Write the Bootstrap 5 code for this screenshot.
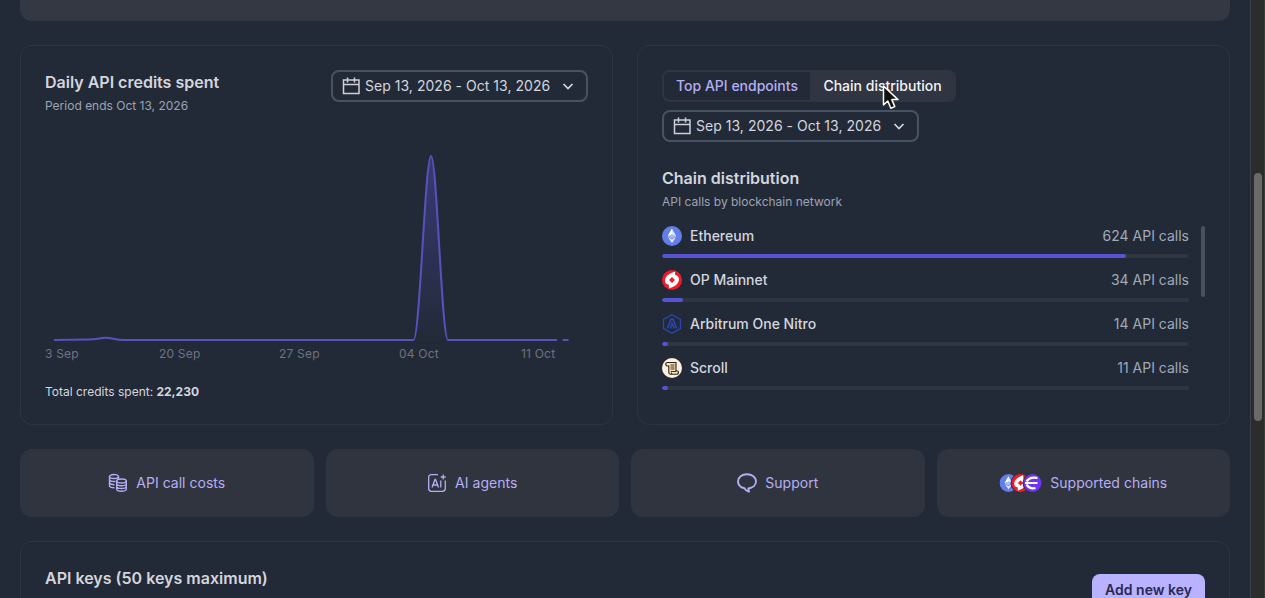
<!DOCTYPE html>
<html lang="en">
<head>
  <meta charset="UTF-8" />
  <meta name="viewport" content="width=device-width, initial-scale=1.0" />
  <title>API dashboard</title>
  <link href="https://cdn.jsdelivr.net/npm/bootstrap@5.3.0/dist/css/bootstrap.min.css" rel="stylesheet">
  <style>
    body {
      background: #232a37;
      color: #d3d6df;
      font-family: Inter, "Liberation Sans", sans-serif;
      font-size: 14px;
      line-height: 20px;
      height: 598px;
      overflow: hidden;
    }

    .page-main {
      width: 1250px;
      height: 598px;
      padding: 0 20px;
      overflow: hidden;
    }

    .top-banner {
      height: 21px;
      margin-bottom: 24px;
      background: #343843;
      border-radius: 0 0 12px 12px;
    }

    .panel {
      background: #232a37;
      border: 1px solid #2e3541;
      border-radius: 12px;
      padding: 24px;
    }

    .stat-panel {
      flex: 1 1 0;
      height: 380px;
    }

    .panel-title {
      font-size: 16px;
      font-weight: 600;
      line-height: 24px;
      margin: 0;
      color: #d3d5de;
    }

    .panel-sub {
      font-size: 12px;
      line-height: 20px;
      margin: 2px 0 0;
      color: #9ca3b4;
    }

    .date-btn {
      width: 257px;
      height: 32px;
      padding: 0 12px 0 9px;
      border: 2px solid #465363;
      border-radius: 8px;
      background: none;
      color: #d3d6df;
      font-size: 14px;
      line-height: 20px;
      letter-spacing: .03px;
    }

    .date-btn .cal { margin-right: 5px; }

    .tab-group {
      width: 294px;
      height: 32px;
      border: 2px solid #303541;
      border-radius: 8px;
      overflow: hidden;
      font-weight: 500;
    }

    .tab-link {
      color: #b5aef5;
      width: 146px;
      text-align: center;
    }

    .tab-link.is-on {
      color: #f3f4f8;
      background: #313541;
      flex: 1;
      padding-left: 1px;
    }

    .chart text {
      font-size: 12px;
      fill: #6d7380;
      letter-spacing: .2px;
    }

    .chain-wrap { margin-top: 14px; }
    .chain-list { width: 527px; }
    .chain-row { margin-bottom: 12px; }
    .chain-row svg { margin-right: 8px; }
    .chain-name { font-weight: 500; }
    .chain-calls { color: #9fa9ba; }

    .chain-bar {
      height: 4px;
      margin-top: 8px;
      background: #303541;
      border-radius: 2px;
    }

    .chain-bar .progress-bar {
      background: #5753d3;
      border-radius: 2px;
    }

    .list-thumb {
      width: 4px;
      height: 71px;
      margin-left: 12px;
      background: #4b505d;
      border-radius: 2px;
    }

    .tile {
      flex: 1 1 0;
      height: 68px;
      background: #30343f;
      border-radius: 12px;
      color: #b5aef5;
      letter-spacing: .03px;
    }

    .key-btn {
      width: 113px;
      height: 32px;
      padding: 0;
      border: 0;
      border-radius: 8px;
      background: #b9b3ff;
      color: #2a2850;
      font-size: 14px;
      font-weight: 600;
    }

    .page-scroll {
      width: 15px;
      height: 598px;
      padding: 173px 0 0 3px;
      background: #2b2c2c;
      border-left: 1px solid #3b3f45;
      border-right: 1px solid #3b3d3d;
    }

    .page-thumb {
      width: 8px;
      height: 248px;
      background: #6a6a68;
      border-radius: 4px;
    }

    .pointer {
      position: absolute;
      left: 881px;
      top: 84px;
    }
  </style>
</head>
<body>
  <!-- Shared icons -->
  <svg width="0" height="0" class="position-absolute">
    <defs>
      <symbol id="cal" viewBox="0 0 18 18">
        <path d="M1.500 3h15.500v13.500H1.500zM1.500 7.500h15.500M5.500 .5v5M12.500 .5v5" fill="none" stroke="#cdd0d9" stroke-width="1.500" />
      </symbol>
      <symbol id="chev" viewBox="0 0 12 12">
        <path d="M1.500 4 6 8.500 10.500 4" fill="none" stroke="#d3d6df" stroke-width="1.700" />
      </symbol>
      <symbol id="eth" viewBox="0 0 20 20">
        <circle cx="10" cy="10" r="10" fill="#627eea" />
        <path d="M10 2.500 5.800 10 10 12.400 14.200 10z" fill="#dfe5fd" />
        <path d="M10 2.500 5.800 10 10 8.200z" fill="#fff" />
        <path d="M10 8.200 5.800 10 10 12.400 14.200 10z" fill="#a9b8f5" />
        <path d="M5.800 11 10 17 14.200 11 10 13.500z" fill="#e6eafd" />
      </symbol>
      <symbol id="op" viewBox="0 0 20 20">
        <circle cx="10" cy="10" r="10" fill="#f01a2b" />
        <path d="M13 1.500C8 3 3.200 6 3 10.500c-.1 2.700 1.400 4 3.800 4.200L7 18.500C12 17 16.800 14 17 9.500c.1-2.700-1.400-4-3.800-4.200z" fill="#fff" />
        <path d="M10 7 11.500 8.500 13 10 11.500 11.500 10 13 8.500 11.500 7 10 8.500 8.500z" fill="#f01a2b" />
      </symbol>
    </defs>
  </svg>

  <div class="d-flex">
    <main class="page-main">
      <div class="top-banner"></div>

      <div class="d-flex gap-4">
        <!-- Daily credits -->
        <section class="panel stat-panel">
          <div class="d-flex justify-content-between align-items-start">
            <div>
              <h2 class="panel-title">Daily API credits spent</h2>
              <p class="panel-sub">Period ends Oct 13, 2026</p>
            </div>
            <button class="date-btn d-flex align-items-center">
              <svg class="cal" width="18" height="18"><use href="#cal" /></svg>
              <span>Sep 13, 2026 - Oct 13, 2026</span>
              <svg class="ms-auto" width="12" height="12"><use href="#chev" /></svg>
            </button>
          </div>
          <svg class="chart d-block" width="543" height="266" viewBox="45 116 543 266">
            <defs>
              <linearGradient id="fade" x1="0" y1="0" x2="0" y2="1">
                <stop offset="0" stop-color="#5753d3" stop-opacity=".4" />
                <stop offset="1" stop-color="#5753d3" stop-opacity="0" />
              </linearGradient>
            </defs>
            <path d="M414 340C420 336 425 156 431 156S442 336 448 340z" fill="url(#fade)" />
            <path d="M54 340L88 339.500C98 339.500 100 337.700 106 337.700S115 340 124 340H413.500C420 340 425 156 431 156S441.500 340 448 340H557" fill="none" stroke="#5753bd" stroke-width="2" />
            <path d="M562.500 340H568.500" stroke="#5753bd" stroke-width="2" />
            <text x="45" y="358">3 Sep</text>
            <text x="159" y="358">20 Sep</text>
            <text x="279" y="358">27 Sep</text>
            <text x="399" y="358">04 Oct</text>
            <text x="521" y="358">11 Oct</text>
          </svg>
          <div class="panel-sub m-0 text-reset">Total credits spent: <b>22,230</b></div>
        </section>

        <!-- Chain distribution -->
        <section class="panel stat-panel">
          <div class="tab-group d-flex align-items-stretch">
            <span class="tab-link d-flex align-items-center justify-content-center">Top API endpoints</span>
            <span class="tab-link is-on d-flex align-items-center justify-content-center">Chain distribution</span>
          </div>
          <button class="date-btn d-flex align-items-center mt-2 mb-4">
            <svg class="cal" width="18" height="18"><use href="#cal" /></svg>
            <span>Sep 13, 2026 - Oct 13, 2026</span>
            <svg class="ms-auto" width="12" height="12"><use href="#chev" /></svg>
          </button>
          <h2 class="panel-title">Chain distribution</h2>
          <p class="panel-sub">API calls by blockchain network</p>
          <div class="chain-wrap d-flex align-items-start">
            <div class="chain-list">
              <div class="chain-row">
                <div class="d-flex">
                  <svg width="20" height="20"><use href="#eth" /></svg>
                  <span class="chain-name">Ethereum</span>
                  <span class="chain-calls ms-auto">624 API calls</span>
                </div>
                <div class="progress chain-bar"><div class="progress-bar" style="width: 88.1%"></div></div>
              </div>
              <div class="chain-row">
                <div class="d-flex">
                  <svg width="20" height="20"><use href="#op" /></svg>
                  <span class="chain-name">OP Mainnet</span>
                  <span class="chain-calls ms-auto">34 API calls</span>
                </div>
                <div class="progress chain-bar"><div class="progress-bar" style="width: 4%"></div></div>
              </div>
              <div class="chain-row">
                <div class="d-flex">
                  <svg width="20" height="20" viewBox="0 0 20 20" fill="none" stroke="#2748b4">
                    <path d="M10 .8 18.500 5.500v9L10 19.200 1.500 14.500v-9z" stroke-width="1.300" />
                    <path d="M5.300 14.500 9 5.200h2l3.700 9.300M8.300 14.500 10 9.500l2.200 5" stroke-width="1.600" />
                  </svg>
                  <span class="chain-name">Arbitrum One Nitro</span>
                  <span class="chain-calls ms-auto">14 API calls</span>
                </div>
                <div class="progress chain-bar"><div class="progress-bar" style="width: 1.1%"></div></div>
              </div>
              <div class="chain-row">
                <div class="d-flex">
                  <svg width="20" height="20" viewBox="0 0 20 20">
                    <circle cx="10" cy="10" r="10" fill="#fdf0df" />
                    <path d="M5.500 4.500h8.500v8.500h1.500q1.200.3 1 1.700t-1.500 1.600H8.300q-1.500-.2-1.500-2V8H5Q3.500 7.500 3.700 6t1.800-1.500z" fill="#f8e0ba" stroke="#2a2118" stroke-width="1.100" />
                    <path d="M8.500 7h4M8.500 9h4M8.500 11h4M8.700 13.500H14M9.500 16v-1.500" fill="none" stroke="#2a2118" stroke-width=".9" />
                  </svg>
                  <span class="chain-name">Scroll</span>
                  <span class="chain-calls ms-auto">11 API calls</span>
                </div>
                <div class="progress chain-bar"><div class="progress-bar" style="width: 1.1%"></div></div>
              </div>
            </div>
            <div class="list-thumb"></div>
          </div>
        </section>
      </div>

      <!-- Shortcuts -->
      <div class="d-flex my-4" style="gap: 12px">
        <div class="tile d-flex align-items-center justify-content-center gap-2">
          <svg width="20" height="20" viewBox="0 0 20 20" fill="none" stroke="#b5aef5" stroke-width="1.400">
            <path d="M1.500 3.500v9c0 1.300 2 2.200 5 2.300M1.500 6.500c.5 1.500 3 2.200 6 2M1.500 9.500c.5 1.500 2.500 2.200 5 2.200M10.500 3.500v3" />
            <ellipse cx="6" cy="3.500" rx="4.500" ry="2" />
            <ellipse cx="13.500" cy="8" rx="4.800" ry="2" />
            <path d="M8.700 8v8c0 3 9.600 3 9.600 0V8M8.700 10.700c0 2.700 9.600 2.700 9.600 0M8.700 13.400c0 2.700 9.600 2.700 9.600 0" />
          </svg>
          <span>API call costs</span>
        </div>
        <div class="tile d-flex align-items-center justify-content-center gap-2">
          <svg width="20" height="20" viewBox="0 0 20 20" fill="none" stroke="#b5aef5" stroke-width="1.300">
            <path d="M11 1.700H4.500Q1.700 1.700 1.700 4.500v11q0 2.800 2.800 2.800h11q2.800 0 2.800-2.800V7.500" />
            <path d="M5 14.500 8 6.500h.5l3 8M6 12h4.500M13.800 7.500v7M16.200 1.500v5M13.700 4h5" />
          </svg>
          <span>AI agents</span>
        </div>
        <div class="tile d-flex align-items-center justify-content-center gap-2">
          <svg width="20" height="20" viewBox="0 0 20 20" fill="none" stroke="#b5aef5" stroke-width="1.900">
            <path d="M11.300 15.500 12 18.700Q8.500 17.500 7.500 15.300C3.500 14.500 1 11.700 1 8.300 1 4 5 1.200 10 1.200s9 2.800 9 7.100c0 3.800-3.200 6.700-7.700 7.200z" stroke-linejoin="round" />
          </svg>
          <span>Support</span>
        </div>
        <div class="tile d-flex align-items-center justify-content-center gap-2">
          <svg width="43" height="20" viewBox="0 0 43 20">
            <use href="#eth" x=".5" y="1" width="18" height="18" />
            <circle cx="21.500" cy="10" r="10" fill="#30343f" />
            <use href="#op" x="12.500" y="1" width="18" height="18" />
            <circle cx="33.500" cy="10" r="10" fill="#30343f" />
            <circle cx="33.500" cy="10" r="9" fill="#6d35f0" />
            <path d="M38.500 5Q31 3.500 27.500 8.500M26 10h12.500M27.500 11.500Q31 16.500 36.500 15" fill="none" stroke="#fff" stroke-width="2.200" />
          </svg>
          <span>Supported chains</span>
        </div>
      </div>

      <!-- Keys -->
      <section class="panel">
        <div class="d-flex justify-content-between align-items-center">
          <h2 class="panel-title pb-4">API keys (50 keys maximum)</h2>
          <button class="key-btn">Add new key</button>
        </div>
      </section>
    </main>
    <div class="page-scroll"><div class="page-thumb"></div></div>
  </div>

  <svg class="pointer" width="20" height="28" viewBox="0 0 20 28">
    <path d="M2.500 2v19l4.300-4 3 7.300 4-1.700-3-7H17z" fill="#111" stroke="#fff" stroke-width="1.500" stroke-linejoin="round" />
  </svg>
  <script src="https://cdn.jsdelivr.net/npm/bootstrap@5.3.0/dist/js/bootstrap.bundle.min.js"></script>
</body>
</html>
